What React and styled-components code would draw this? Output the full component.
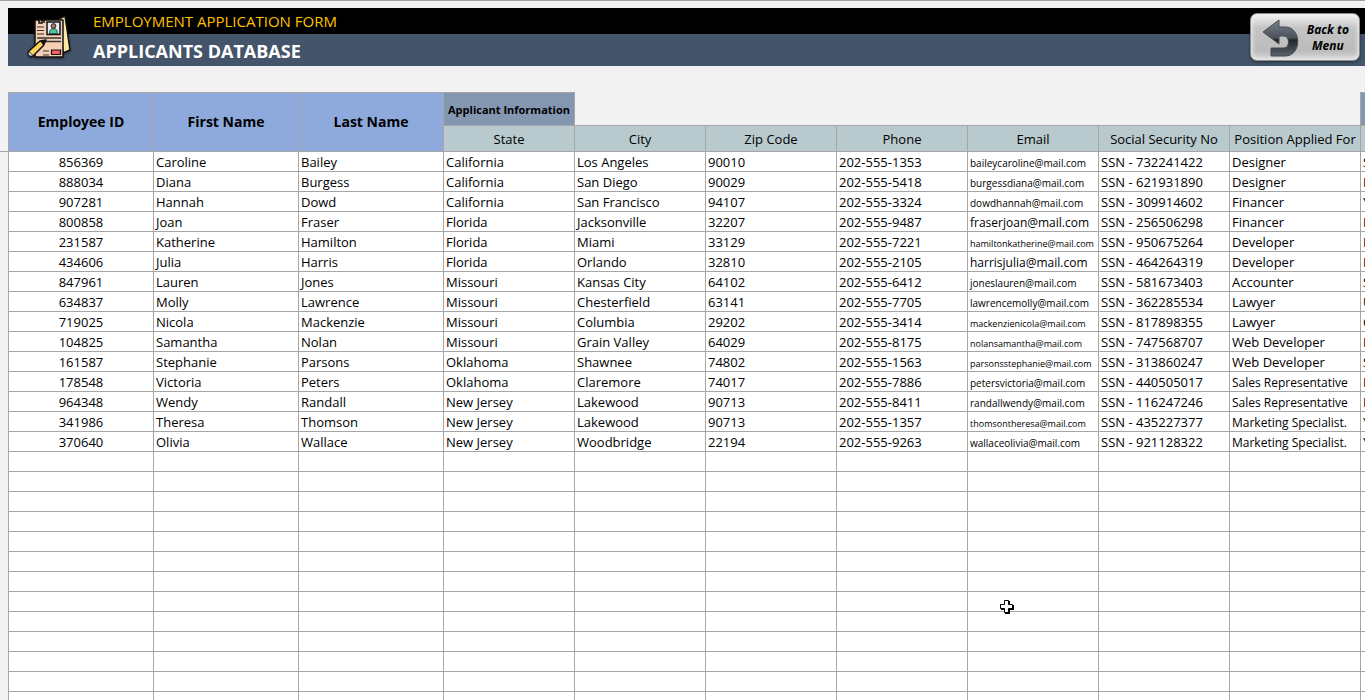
import React from 'react';
import styled, { createGlobalStyle } from 'styled-components';

const GlobalStyle = createGlobalStyle`
	body {
		margin: 0;
		background: #f2f2f2;
		color: black;
		font-family: 'Open Sans', 'Noto Sans', sans-serif;
	}
`;

const Page = styled.div`
	box-sizing: border-box;
	height: 100vh;
	overflow: hidden;
	border-top: 1px solid #a0a0a0;
	padding-top: 7px;
`;

const Banner = styled.header`
	display: flex;
	align-items: center;
	margin-left: 8px;
	height: 58px;
	padding-right: 5px;
	background: linear-gradient(#000000 26px, #44546a 26px);
`;

const Logo = styled.svg`
	flex: none;
	width: 48px;
	height: 48px;
	margin: 0 19px 0 18px;
	filter: drop-shadow(0 1px 1px rgba(0, 0, 0, 0.5));
`;

const Titles = styled.div`
	flex: 1;
`;

const FormName = styled.p`
	margin: 0;
	color: #ffc000;
	font-size: 15px;
	line-height: 26px;
`;

const Title = styled.h1`
	margin: 0;
	padding-top: 2px;
	color: white;
	font-size: 18px;
	font-weight: 700;
	line-height: 30px;
`;

const BackButton = styled.button`
	display: flex;
	align-items: center;
	justify-content: space-between;
	width: 110px;
	height: 48px;
	padding: 2px 10px 0 11px;
	border: 1px solid #8c8c8c;
	border-radius: 7px;
	background: linear-gradient(#f4f4f4, #c4c4c4 30%, #bcbcbc 80%, #d8d8d8);
	box-shadow: inset 0 0 4px 1px #eeeeee, 0 1px 3px rgba(0, 0, 0, 0.5);
	color: black;
	font-family: inherit;
	font-size: 12px;
	font-style: italic;
	font-weight: 700;
	line-height: 16px;
`;

const Arrow = styled.svg`
	width: 38px;
	height: 38px;
`;

const SheetArea = styled.main`
	display: flex;
	align-items: flex-start;
	margin-top: 26px;
`;

const Gutter = styled.div`
	flex: none;
	width: 8px;
	height: 59px;
	border-bottom: 1px solid #a6a6a6;
`;

const Sheet = styled.table`
	flex: none;
	width: 1484px;
	border-spacing: 0;
	table-layout: fixed;
	font-size: 13px;
	line-height: 15px;
`;

const Col = styled.col`
	width: ${props => props.$width}px;
`;

const HeadCell = styled.th`
	height: 23px;
	padding: 2px 0 0;
	border: solid #a6a6a6;
	border-width: 0 1px 1px 0;
	background: #b8cacd;
	font-weight: 400;
	white-space: nowrap;
`;

const NameCell = styled(HeadCell)`
	padding: 0 0 2px;
	border-top-width: 1px;
	background: #8ea9db;
	font-size: 14px;
	font-weight: 700;

	&:first-child {
		border-left-width: 1px;
	}
`;

const GroupCell = styled(HeadCell)`
	height: 32px;
	padding: 0;
	border-top-width: 1px;
	background: #8497b0;
	font-size: 11px;
	font-weight: 700;
`;

const GapCell = styled.td`
	padding: 0;
	border-right: 1px solid #a6a6a6;
	border-bottom: 1px solid #a6a6a6;
`;

const Cell = styled.td`
	height: 16px;
	padding: 3px 0 0 2px;
	border: solid #a6a6a6;
	border-width: 0 1px 1px 0;
	background: white;
	font-size: ${props => props.$size || 13}px;
	vertical-align: baseline;
	white-space: nowrap;

	&:first-child {
		border-left-width: 1px;
		padding-left: 0;
		text-align: center;
	}
`;

const Cursor = styled.svg`
	position: absolute;
	left: 998px;
	top: 598px;
	width: 17px;
	height: 17px;
`;

const widths = [146, 145, 145, 131, 131, 131, 131, 131, 131, 131, 131];

const columns = ['State', 'City', 'Zip Code', 'Phone', 'Email', 'Social Security No', 'Position Applied For', ''];

const applicants = [
	['856369', 'Caroline', 'Bailey', 'California', 'Los Angeles', '90010', '202-555-1353', 'baileycaroline@mail.com', 'SSN - 732241422', 'Designer', 'S'],
	['888034', 'Diana', 'Burgess', 'California', 'San Diego', '90029', '202-555-5418', 'burgessdiana@mail.com', 'SSN - 621931890', 'Designer', 'F'],
	['907281', 'Hannah', 'Dowd', 'California', 'San Francisco', '94107', '202-555-3324', 'dowdhannah@mail.com', 'SSN - 309914602', 'Financer', 'Y'],
	['800858', 'Joan', 'Fraser', 'Florida', 'Jacksonville', '32207', '202-555-9487', 'fraserjoan@mail.com', 'SSN - 256506298', 'Financer', 'F'],
	['231587', 'Katherine', 'Hamilton', 'Florida', 'Miami', '33129', '202-555-7221', 'hamiltonkatherine@mail.com', 'SSN - 950675264', 'Developer', 'F'],
	['434606', 'Julia', 'Harris', 'Florida', 'Orlando', '32810', '202-555-2105', 'harrisjulia@mail.com', 'SSN - 464264319', 'Developer', 'F'],
	['847961', 'Lauren', 'Jones', 'Missouri', 'Kansas City', '64102', '202-555-6412', 'joneslauren@mail.com', 'SSN - 581673403', 'Accounter', 'S'],
	['634837', 'Molly', 'Lawrence', 'Missouri', 'Chesterfield', '63141', '202-555-7705', 'lawrencemolly@mail.com', 'SSN - 362285534', 'Lawyer', 'U'],
	['719025', 'Nicola', 'Mackenzie', 'Missouri', 'Columbia', '29202', '202-555-3414', 'mackenzienicola@mail.com', 'SSN - 817898355', 'Lawyer', 'C'],
	['104825', 'Samantha', 'Nolan', 'Missouri', 'Grain Valley', '64029', '202-555-8175', 'nolansamantha@mail.com', 'SSN - 747568707', 'Web Developer', 'F'],
	['161587', 'Stephanie', 'Parsons', 'Oklahoma', 'Shawnee', '74802', '202-555-1563', 'parsonsstephanie@mail.com', 'SSN - 313860247', 'Web Developer', 'S'],
	['178548', 'Victoria', 'Peters', 'Oklahoma', 'Claremore', '74017', '202-555-7886', 'petersvictoria@mail.com', 'SSN - 440505017', 'Sales Representative', 'F'],
	['964348', 'Wendy', 'Randall', 'New Jersey', 'Lakewood', '90713', '202-555-8411', 'randallwendy@mail.com', 'SSN - 116247246', 'Sales Representative', 'F'],
	['341986', 'Theresa', 'Thomson', 'New Jersey', 'Lakewood', '90713', '202-555-1357', 'thomsontheresa@mail.com', 'SSN - 435227377', 'Marketing Specialist.', 'Y'],
	['370640', 'Olivia', 'Wallace', 'New Jersey', 'Woodbridge', '22194', '202-555-9263', 'wallaceolivia@mail.com', 'SSN - 921128322', 'Marketing Specialist.', 'Y'],
];

const emptyRows = Array.from({ length: 13 });

const textSize = (text) => {
	if (!text.includes('@')) {
		return text.length > 18 ? 12 : 13;
	}
	if (/^(fraser|harris)/.test(text)) {
		return 12;
	}
	return /^(hamilton|mackenzie|nolan|parsons|thomson)/.test(text) ? 9 : 10;
};

const ResumeLogo = () => (
	<Logo viewBox="0 0 48 48" aria-hidden="true">
		<path d="M33 6l6-3 5 34-7 3z" fill="#fbe9a5" stroke="#111" strokeWidth="1.500" strokeLinejoin="round" />
		<path d="M9 7h28v37H9z" fill="#f6cfb4" stroke="#111" strokeWidth="1.500" strokeLinejoin="round" />
		<path d="M13 6v4h3V6M18 10V6" fill="none" stroke="#111" strokeWidth="1.500" />
		<path d="M11 14h7M11 17.500h7M11 21h7" stroke="#333" strokeWidth="1.200" />
		<path d="M11 25h24M19 28.500h16" stroke="#333" strokeWidth="1.500" />
		<path d="M17 38h6M17 42h6" stroke="#333" strokeWidth="1.200" />
		<path d="M21 9h13v12.500H21z" fill="#e6edf5" stroke="#111" strokeWidth="1.500" />
		<path d="M23.500 20.700c0-4 1.500-5 4-5s4 1 4 5z" fill="#42c9a0" stroke="#222" strokeWidth="0.800" />
		<circle cx="27.500" cy="13" r="2.400" fill="#a9725c" stroke="#111" strokeWidth="0.800" />
		<path d="M25.500 37h9v4.500h-9z" fill="#f4635c" stroke="#111" strokeWidth="1.200" />
		<path d="M3 38L14 28l6-1-2.500 5.500L7 43c-3 2-6-2-4-5z" fill="#f9d25b" stroke="#111" strokeWidth="1.500" strokeLinejoin="round" />
		<path d="M14 28l6-1-2.500 5.500z" fill="#111" />
		<path d="M3 38.500l4 4c-3 2-6-1-4-4z" fill="#d8dce3" stroke="#111" strokeWidth="0.800" />
	</Logo>
);

const BackArrow = () => (
	<Arrow viewBox="0 0 38 38" aria-hidden="true">
		<defs>
			<linearGradient id="steel" x1="0" y1="0" x2="0" y2="1">
				<stop offset="0" stopColor="#77808c" />
				<stop offset="0.500" stopColor="#4c525b" />
				<stop offset="0.550" stopColor="#22262b" />
				<stop offset="1" stopColor="#5b626c" />
			</linearGradient>
		</defs>
		<path d="M1 13L17 1v7h6c17 0 17 29 0 29H9v-8h13c6 0 6-12 0-12h-5v8z" fill="url(#steel)" stroke="#454b54" strokeLinejoin="round" />
	</Arrow>
);

const App = () => (
	<Page>
		<GlobalStyle />
		<Banner>
			<ResumeLogo />
			<Titles>
				<FormName>EMPLOYMENT APPLICATION FORM</FormName>
				<Title>APPLICANTS DATABASE</Title>
			</Titles>
			<BackButton type="button">
				<BackArrow />
				<span>Back to<br />Menu</span>
			</BackButton>
		</Banner>
		<SheetArea>
			<Gutter />
			<Sheet>
				<colgroup>
					{widths.map((width, i) => <Col key={i} $width={width} />)}
				</colgroup>
				<thead>
					<tr>
						<NameCell rowSpan={2}>Employee ID</NameCell>
						<NameCell rowSpan={2}>First Name</NameCell>
						<NameCell rowSpan={2}>Last Name</NameCell>
						<GroupCell>Applicant Information</GroupCell>
						<GapCell colSpan={6} />
						<GroupCell />
					</tr>
					<tr>
						{columns.map(name => <HeadCell key={name}>{name}</HeadCell>)}
					</tr>
				</thead>
				<tbody>
					{applicants.map(row => (
						<tr key={row[0]}>
							{row.map((text, i) => <Cell key={i} $size={textSize(text)}>{text}</Cell>)}
						</tr>
					))}
					{emptyRows.map((_, r) => (
						<tr key={r}>
							{widths.map((_, i) => <Cell key={i} />)}
						</tr>
					))}
				</tbody>
			</Sheet>
		</SheetArea>
		<Cursor viewBox="0 0 17 17" aria-hidden="true">
			<path d="M7 3h5v4h4v5h-4v4H7v-4H3V7h4z" fill="black" />
			<path d="M6.500 2.500h4v4h4v4h-4v4h-4v-4h-4v-4h4z" fill="white" stroke="black" />
		</Cursor>
	</Page>
);

export default App;
